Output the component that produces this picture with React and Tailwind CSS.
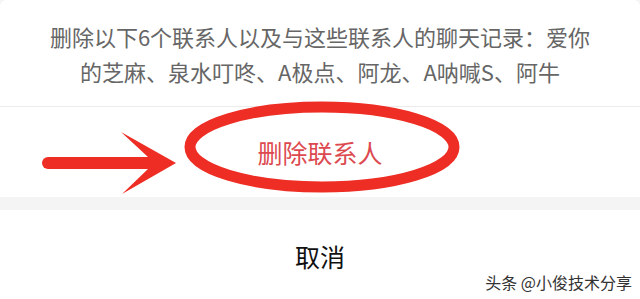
import React from 'react';

const font = { fontFamily: '"Noto Sans CJK SC", "Noto Sans", sans-serif' };

export default function App() {
    return (
        <div className="relative w-[640px] h-[299px] overflow-hidden bg-[#f4f4f4]" style={font}>
            <div className="flex flex-col h-full">
                <div className="h-[106px] bg-white rounded-t-[6px] flex flex-col items-center justify-center pt-[2px]">
                    <p className="text-[22px] leading-[35px] text-[#666] text-center">删除以下6个联系人以及与这些联系人的聊天记录：爱你</p>
                    <p className="text-[22px] leading-[35px] text-[#666] text-center">的芝麻、泉水叮咚、A极点、阿龙、A呐喊S、阿牛</p>
                </div>
                <div className="h-px bg-[#ececec]" />
                <div className="h-[90px] bg-white flex items-center justify-center">
                    <span className="text-[25px] text-[#dc4a50] pt-[2px]">删除联系人</span>
                </div>
                <div className="h-[13px] bg-[#f4f4f4]" />
                <div className="flex-1 bg-white flex items-center justify-center">
                    <span className="text-[25px] text-[#111] pt-[4px]">取消</span>
                </div>
            </div>

            <svg className="absolute inset-0 pointer-events-none" width="640" height="299" viewBox="0 0 640 299">
                <ellipse cx="322" cy="147" rx="132" ry="40" fill="none" stroke="#ee2d24" strokeWidth="11" />
                <line x1="48" y1="163" x2="148" y2="163" stroke="#ee2d24" strokeWidth="12" strokeLinecap="round" />
                <polygon points="121,132 176,163 122,194 148,169 148,157" fill="#ee2d24" />
            </svg>

            <div className="absolute right-[8px] bottom-[9px] text-[16px] leading-none text-[#333]">头条 @小俊技术分享</div>
        </div>
    );
}
